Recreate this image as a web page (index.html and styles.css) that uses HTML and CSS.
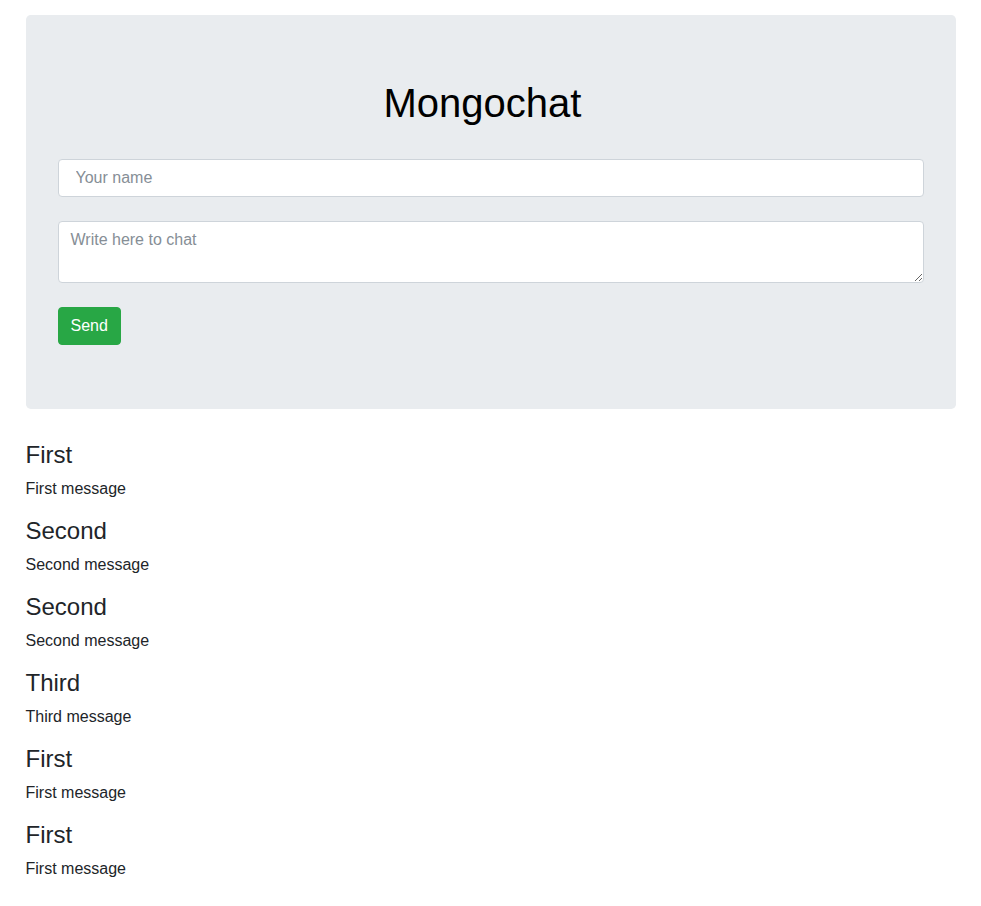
FILE: index.html
```html
<!DOCTYPE html>
<html>
<head>
<meta charset="utf-8">
<title>Mongochat</title>
<link rel="stylesheet" href="styles.css">
</head>
<body>
<div class="container">
  <div class="jumbotron">
    <h1 class="title">Mongochat</h1>
    <form class="chat-form">
      <input class="form-control name-input" type="text" placeholder="Your name">
      <textarea class="form-control chat-text" placeholder="Write here to chat"></textarea>
      <div><button type="button" class="btn-send">Send</button></div>
    </form>
  </div>
  <div class="messages">
    <div class="message"><h4 class="msg-name">First</h4><p class="msg-text">First message</p></div>
    <div class="message"><h4 class="msg-name">Second</h4><p class="msg-text">Second message</p></div>
    <div class="message"><h4 class="msg-name">Second</h4><p class="msg-text">Second message</p></div>
    <div class="message"><h4 class="msg-name">Third</h4><p class="msg-text">Third message</p></div>
    <div class="message"><h4 class="msg-name">First</h4><p class="msg-text">First message</p></div>
    <div class="message"><h4 class="msg-name">First</h4><p class="msg-text">First message</p></div>
  </div>
</div>
</body>
</html>
```
FILE: styles.css
```css
* { box-sizing: border-box; }
body {
  margin: 0;
  font-family: "Liberation Sans", Arial, sans-serif;
  font-size: 16px;
  line-height: 1.5;
  color: #212529;
  background: #fff;
}
.container {
  width: 930px;
  margin: 15px auto 0;
}
.jumbotron {
  background: #e9ecef;
  border-radius: 4.8px;
  padding: 64px 32px;
  margin-bottom: 32px;
}
.title {
  margin: 0 0 8px;
  padding-right: 16px;
  font-size: 40px;
  font-weight: 500;
  line-height: 1.2;
  text-align: center;
  color: #000;
}
.chat-form {
  display: flex;
  flex-direction: column;
  gap: 24px;
  padding-top: 24px;
}
.form-control {
  display: block;
  width: 100%;
  border: 1px solid #ced4da;
  border-radius: 4px;
  background: #fff;
  font-family: "Liberation Sans", Arial, sans-serif;
  font-size: 16px;
  line-height: 1.5;
  color: #495057;
  padding: 6px 12px;
}
.form-control::placeholder { color: #868e96; opacity: 1; }
.name-input { height: 38px; padding-left: 17px; }
.chat-text { height: 62px; resize: vertical; }
.btn-send {
  background: #28a745;
  border: 1px solid #28a745;
  color: #fff;
  border-radius: 4px;
  font-family: "Liberation Sans", Arial, sans-serif;
  font-size: 16px;
  line-height: 1.5;
  padding: 6px 12px;
  height: 38px;
}
.msg-name {
  margin: 0 0 8px;
  font-size: 24px;
  font-weight: 500;
  line-height: 28px;
}
.msg-text {
  margin: 0 0 16px;
  line-height: 24px;
}
```
